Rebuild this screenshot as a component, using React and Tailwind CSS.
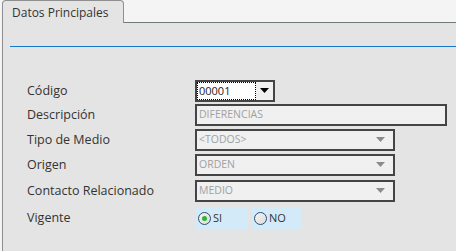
import React from 'react';

const Row = ({ label, className = '', children }) => (
  <div className={`flex items-center ${className}`}>
    <div className="w-[168px] shrink-0 text-[12.5px] text-[#333]">{label}</div>
    {children}
  </div>
);

const Arrow = ({ color }) => (
  <svg width="9" height="6" viewBox="0 0 9 6">
    <path d="M0 0 H9 L4.5 5 Z" fill={color} />
  </svg>
);

const Select = ({ value }) => (
  <div className="w-[200px] h-[22px] border-2 border-[#444] bg-[#f0f0f0] flex items-center justify-between pl-[2px] pr-[8px]">
    <span className="text-[10.5px] text-[#a0a0a0] uppercase">{value}</span>
    <Arrow color="#8c8c8c" />
  </div>
);

const Radio = ({ label, checked, className = '' }) => (
  <div className={`h-[21px] bg-[#d3ebf8] flex items-center pl-[2px] gap-[2px] ${className}`}>
    <div className="w-[13px] h-[13px] rounded-full border border-[#2f4f6f] bg-gradient-to-br from-[#f4f4f4] to-[#dcdcdc] flex items-center justify-center">
      {checked && <div className="w-[5px] h-[5px] rounded-full bg-[#2fb52f]" />}
    </div>
    <span className="text-[11px] text-[#333]">{label}</span>
  </div>
);

export default function App() {
  return (
    <div className="w-[456px] h-[251px] bg-[#f4f4f4] overflow-hidden font-['Open_Sans',sans-serif] flex flex-col">
      <div className="flex h-[23px] shrink-0">
        <div className="w-[2px]" />
        <div className="w-[122px] border-l border-t border-r border-[#8e8e8e] rounded-t-[4px] bg-[#e4e4e4] pl-[9px] pt-[3px] text-[12px] text-[#333]">
          Datos Principales
        </div>
        <div className="flex-1 border-b border-[#6f7b7b]" />
      </div>
      <div className="flex-1 ml-[2px] border-l border-[#8e8e8e] bg-[#e4e4e4]">
        <div className="ml-[7px] mt-[23px] h-px bg-[#1677c8]" />
        <div className="pl-[24px] pt-[33px]">
          <Row label="Código">
            <div className="w-[80px] h-[22px] border-2 border-[#444] bg-white flex">
              <div className="flex-1 border border-dotted border-black flex items-center pl-px text-[11px] text-[#222]">00001</div>
              <div className="w-[17px] bg-[#f0f0f0] flex items-center justify-center">
                <Arrow color="#000" />
              </div>
            </div>
          </Row>
          <Row label="Descripción" className="mt-[2px]">
            <div className="w-[252px] h-[22px] border-2 border-[#444] bg-[#f0f0f0] flex items-center pl-[2px] text-[10.5px] text-[#a0a0a0]">
              DIFERENCIAS
            </div>
          </Row>
          <Row label="Tipo de Medio" className="mt-[3px]">
            <Select value="<TODOS>" />
          </Row>
          <Row label="Origen" className="mt-[3px]">
            <Select value="ORDEN" />
          </Row>
          <Row label="Contacto Relacionado" className="mt-[4px]">
            <Select value="MEDIO" />
          </Row>
          <Row label="Vigente" className="mt-[6px]">
            <div className="flex ml-px">
              <Radio label="SI" checked className="w-[51px]" />
              <Radio label="NO" className="w-[50px] ml-[5px]" />
            </div>
          </Row>
        </div>
      </div>
    </div>
  );
}
